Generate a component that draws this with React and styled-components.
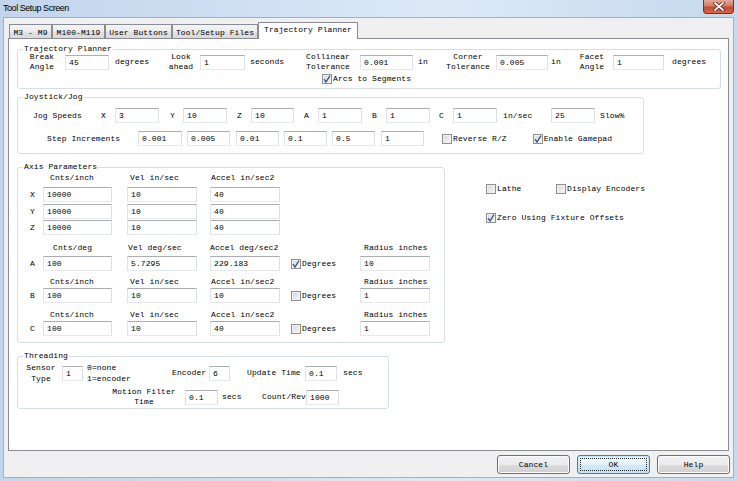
import React from 'react';
import styled, { createGlobalStyle } from 'styled-components';

const GlobalStyle = createGlobalStyle`
  html, body {
    margin: 0;
    padding: 0;
    background: #fff;
  }
  body {
    font-family: "Liberation Mono", "Courier New", monospace;
    font-size: 8px;
    letter-spacing: 0.08px;
    color: #000;
  }
`;

const Window = styled.div`
  width: 738px;
  height: 481px;
  box-sizing: border-box;
  display: flex;
  flex-direction: column;
  overflow: hidden;
  background: linear-gradient(to right, #c2d5ec 0%, #d3e2f4 40%, #dde9f7 60%, #c6d9ee 100%);
`;

const TitleBar = styled.div`
  flex: none;
  height: 17px;
  display: flex;
  align-items: flex-start;
  justify-content: space-between;
`;

const Title = styled.span`
  font-family: "Liberation Sans", Arial, sans-serif;
  font-size: 9px;
  letter-spacing: -0.45px;
  line-height: 17px;
  padding-left: 3px;
`;

const CloseBtn = styled.div`
  width: 31px;
  height: 14px;
  margin-right: 4px;
  box-sizing: border-box;
  border: 1px solid #7b2b20;
  border-top: none;
  border-radius: 0 0 4px 4px;
  background: linear-gradient(#e6a897, #d47a64 45%, #c44a31 55%, #d3694b);
  display: flex;
  align-items: center;
  justify-content: center;
`;

const Client = styled.div`
  flex: 1;
  margin: 0 4px 3px 3px;
  border: 1px solid #9fb0c7;
  background: #f0f0f0;
  display: flex;
  flex-direction: column;
  padding-top: 4px;
`;

const TabStrip = styled.div`
  flex: none;
  height: 17px;
  margin-left: 5px;
  display: flex;
  align-items: flex-end;
  position: relative;
  z-index: 1;
`;

const Tab = styled.div`
  flex: none;
  box-sizing: border-box;
  width: ${p => p.$w}px;
  height: ${p => (p.$active ? 17 : 15)}px;
  padding-top: ${p => (p.$active ? 2 : 3)}px;
  border: 1px solid #898c95;
  border-bottom: ${p => (p.$active ? 'none' : '1px solid #898c95')};
  background: ${p => (p.$active ? '#fff' : 'linear-gradient(#f4f4f4, #ececec 50%, #e2e2e2 51%, #dadada)')};
  line-height: 10px;
  text-align: center;
  white-space: pre;
`;

const Panel = styled.div`
  flex: none;
  height: 413px;
  box-sizing: border-box;
  margin: -1px 4px 0 4px;
  padding: 5px 0 0 8px;
  background: #fff;
  border: 1px solid #898c95;
  display: flex;
  flex-direction: column;
  align-items: flex-start;
`;

const Group = styled.fieldset`
  box-sizing: border-box;
  width: ${p => p.$w}px;
  min-inline-size: 0;
  margin: ${p => p.$mt || 0}px 0 0 0;
  padding: 0 0 ${p => p.$pb || 0}px 0;
  border: 1px solid #d5dfe5;
  border-radius: 3px;
`;

const Legend = styled.legend`
  margin-left: 5px;
  padding: 0 1px;
  line-height: 10px;
`;

const Row = styled.div`
  display: flex;
  align-items: center;
  height: ${p => p.$h}px;
  margin-top: ${p => p.$mt || 0}px;
`;

const Txt = styled.span`
  flex: none;
  display: block;
  box-sizing: border-box;
  width: ${p => (p.$w ? `${p.$w}px` : 'auto')};
  margin-left: ${p => p.$ml || 0}px;
  padding-left: ${p => p.$pl || 0}px;
  text-align: ${p => (p.$center ? 'center' : 'left')};
  line-height: ${p => p.$lh || 10}px;
  white-space: pre;
`;

const Field = styled.input.attrs({ type: 'text', readOnly: true })`
  flex: none;
  box-sizing: border-box;
  width: ${p => p.$w}px;
  height: 15px;
  margin: 0 0 0 ${p => p.$ml || 0}px;
  padding: 0 0 0 3px;
  border: 1px solid;
  border-color: #abadb3 #dbdfe6 #e3e9ef #e2e3ea;
  background: #fff;
  font: inherit;
  letter-spacing: inherit;
  color: #000;
  outline: none;
`;

const CheckWrap = styled.span`
  flex: none;
  display: flex;
  align-items: center;
  gap: 1px;
  width: ${p => (p.$w ? `${p.$w}px` : 'auto')};
  margin-left: ${p => p.$ml || 0}px;
  line-height: 10px;
  white-space: pre;
`;

const Box = styled.span`
  flex: none;
  width: 10px;
  height: 10px;
  box-sizing: border-box;
  border: 1px solid #8e8f8f;
  background: linear-gradient(135deg, #d8d8d8, #f7f7f7);
  box-shadow: inset 0 0 0 1px #f2f2f2;
  display: flex;
  align-items: center;
  justify-content: center;
`;

const AxisArea = styled.div`
  display: flex;
  align-items: flex-start;
  margin-top: 8px;
`;

const Options = styled.div`
  margin-left: 41px;
  padding-top: 22px;
  display: flex;
  flex-direction: column;
  gap: 19px;
`;

const OptionRow = styled.div`
  display: flex;
`;

const Footer = styled.div`
  flex: 1;
  display: flex;
  justify-content: flex-end;
  align-items: flex-start;
  gap: 7px;
  padding: 4px 3px 0 0;
`;

const Button = styled.button`
  width: 73px;
  height: 19px;
  box-sizing: border-box;
  padding: 0;
  border: 1px solid ${p => (p.$default ? '#3c7fb1' : '#707070')};
  border-radius: 3px;
  background: ${p => (p.$default
    ? 'linear-gradient(#f1f8fd, #e3f1fb 50%, #d3eaf9 51%, #c4e2f6)'
    : 'linear-gradient(#f2f2f2, #ebebeb 50%, #dddddd 51%, #cfcfcf)')};
  box-shadow: inset 0 0 0 1px ${p => (p.$default ? '#c9e6f8' : '#fbfbfb')};
  font: inherit;
  letter-spacing: inherit;
  color: #000;
  outline: ${p => (p.$default ? '1px dotted #222' : 'none')};
  outline-offset: -4px;
`;

const Check = ({ checked, children, ...rest }) => (
  <CheckWrap {...rest}>
    <Box>
      {checked && (
        <svg width="8" height="8" viewBox="0 0 8 8">
          <path d="M1 4.2 L3 7 L7 0.6" fill="none" stroke="#3b579a" strokeWidth="1.4" />
        </svg>
      )}
    </Box>
    {children}
  </CheckWrap>
);

const tabs = [
  ['M3 - M9', 43],
  ['M100-M119', 53],
  ['User Buttons', 67],
  ['Tool/Setup Files', 86],
  ['Trajectory Planner', 100, true],
];

const inchHeads = [['Cnts/inch', 7], ['Vel in/sec', 3], ['Accel in/sec2', 1]];
const degHeads = [['Cnts/deg', 10], ['Vel deg/sec', 1], ['Accel deg/sec2', 0]];

const Heads = ({ mt, cols, radius }) => (
  <Row $h={10} $mt={mt}>
    <Txt $w={25} />
    <Txt $w={69} $pl={cols[0][1]}>{cols[0][0]}</Txt>
    <Txt $w={70} $ml={15} $pl={cols[1][1]}>{cols[1][0]}</Txt>
    <Txt $w={70} $ml={13} $pl={cols[2][1]}>{cols[2][0]}</Txt>
    {radius && <Txt $w={70} $ml={80} $pl={4}>Radius inches</Txt>}
  </Row>
);

const AxisRow = ({ mt, axis, vals, deg, radius }) => (
  <Row $h={15} $mt={mt}>
    <Txt $w={25} $pl={12}>{axis}</Txt>
    <Field $w={69} value={vals[0]} />
    <Field $w={70} $ml={15} value={vals[1]} />
    <Field $w={70} $ml={13} value={vals[2]} />
    {radius !== undefined && (
      <>
        <Check $w={69} $ml={11} checked={deg}>Degrees</Check>
        <Field $w={70} value={radius} />
      </>
    )}
  </Row>
);

const CloseIcon = () => (
  <svg width="12" height="9" viewBox="0 0 12 9">
    <path d="M2 1 L10 8 M10 1 L2 8" stroke="#5a1d14" strokeWidth="3.4" strokeLinecap="round" />
    <path d="M2 1 L10 8 M10 1 L2 8" stroke="#fff" strokeWidth="1.8" strokeLinecap="round" />
  </svg>
);

export default function App() {
  return (
    <>
      <GlobalStyle />
      <Window>
        <TitleBar>
          <Title>Tool Setup Screen</Title>
          <CloseBtn><CloseIcon /></CloseBtn>
        </TitleBar>
        <Client>
          <TabStrip>
            {tabs.map(([label, w, active]) => (
              <Tab key={label} $w={w} $active={active}>{label}</Tab>
            ))}
          </TabStrip>
          <Panel>
            <Group $w={704} $pb={4}>
              <Legend>Trajectory Planner</Legend>
              <Row $h={20} $mt={-2}>
                <Txt $w={34} $ml={7} $center>{'Break\nAngle'}</Txt>
                <Field $w={44} $ml={6} value="45" />
                <Txt $w={35} $ml={6}>degrees</Txt>
                <Txt $w={34} $ml={14} $center>{'Look\nahead'}</Txt>
                <Field $w={45} $ml={2} value="1" />
                <Txt $w={35} $ml={5}>seconds</Txt>
                <Txt $w={46} $ml={20} $center>{'Collinear\nTolerance'}</Txt>
                <Field $w={53} $ml={9} value="0.001" />
                <Txt $w={10} $ml={5}>in</Txt>
                <Txt $w={46} $ml={17} $center>{'Corner\nTolerance'}</Txt>
                <Field $w={52} $ml={5} value="0.005" />
                <Txt $w={10} $ml={3}>in</Txt>
                <Txt $w={30} $ml={16} $center>{'Facet\nAngle'}</Txt>
                <Field $w={51} $ml={6} value="1" />
                <Txt $ml={8}>degrees</Txt>
              </Row>
              <Row $h={11} $mt={1}>
                <Check $ml={304} checked>Arcs to Segments</Check>
              </Row>
            </Group>

            <Group $w={627} $mt={3} $pb={7}>
              <Legend>Joystick/Jog</Legend>
              <Row $h={15} $mt={6}>
                <Txt $w={68} $ml={15}>Jog Speeds</Txt>
                <Txt $w={14}>X</Txt>
                <Field $w={44} value="3" />
                <Txt $w={13} $ml={11}>Y</Txt>
                <Field $w={44} value="10" />
                <Txt $w={14} $ml={10}>Z</Txt>
                <Field $w={43} value="10" />
                <Txt $w={14} $ml={10}>A</Txt>
                <Field $w={44} value="1" />
                <Txt $w={14} $ml={10}>B</Txt>
                <Field $w={44} value="1" />
                <Txt $w={14} $ml={9}>C</Txt>
                <Field $w={44} value="1" />
                <Txt $w={48} $ml={6}>in/sec</Txt>
                <Field $w={44} value="25" />
                <Txt $ml={5}>Slow%</Txt>
              </Row>
              <Row $h={15} $mt={8}>
                <Txt $w={91} $ml={29}>Step Increments</Txt>
                <Field $w={44} value="0.001" />
                <Field $w={43} $ml={5} value="0.005" />
                <Field $w={43} $ml={6} value="0.01" />
                <Field $w={43} $ml={5} value="0.1" />
                <Field $w={43} $ml={5} value="0.5" />
                <Field $w={43} $ml={6} value="1" />
                <Check $ml={18}>Reverse R/Z</Check>
                <Check $ml={26} checked>Enable Gamepad</Check>
              </Row>
            </Group>

            <AxisArea>
              <Group $w={428} $pb={6}>
                <Legend>Axis Parameters</Legend>
                <Heads mt={1} cols={inchHeads} />
                <AxisRow mt={4} axis="X" vals={['10000', '10', '40']} />
                <AxisRow mt={2} axis="Y" vals={['10000', '10', '40']} />
                <AxisRow mt={1} axis="Z" vals={['10000', '10', '40']} />
                <Heads mt={8} cols={degHeads} radius />
                <AxisRow mt={3} axis="A" vals={['100', '5.7295', '229.183']} deg radius="10" />
                <Heads mt={6} cols={inchHeads} radius />
                <AxisRow mt={1} axis="B" vals={['100', '10', '10']} radius="1" />
                <Heads mt={7} cols={inchHeads} radius />
                <AxisRow mt={1} axis="C" vals={['100', '10', '40']} radius="1" />
              </Group>
              <Options>
                <OptionRow>
                  <Check $w={70}>Lathe</Check>
                  <Check>Display Encoders</Check>
                </OptionRow>
                <OptionRow>
                  <Check checked>Zero Using Fixture Offsets</Check>
                </OptionRow>
              </Options>
            </AxisArea>

            <Group $w={372} $mt={8} $pb={1}>
              <Legend>Threading</Legend>
              <Row $h={22} $mt={1}>
                <Txt $w={34} $ml={6} $center $lh={11}>{'Sensor\nType'}</Txt>
                <Field $w={21} $ml={4} value="1" />
                <Txt $w={45} $ml={4} $lh={11}>{'0=none\n1=encoder'}</Txt>
                <Txt $w={37} $ml={40}>Encoder</Txt>
                <Field $w={21} value="6" />
                <Txt $w={58} $ml={17}>Update Time</Txt>
                <Field $w={32} value="0.1" />
                <Txt $ml={6}>secs</Txt>
              </Row>
              <Row $h={20} $mt={3}>
                <Txt $w={68} $ml={92} $center>{'Motion Filter\nTime'}</Txt>
                <Field $w={33} $ml={7} value="0.1" />
                <Txt $w={22} $ml={4}>secs</Txt>
                <Txt $w={44} $ml={18}>Count/Rev</Txt>
                <Field $w={33} value="1000" />
              </Row>
            </Group>
          </Panel>
          <Footer>
            <Button>Cancel</Button>
            <Button $default>OK</Button>
            <Button>Help</Button>
          </Footer>
        </Client>
      </Window>
    </>
  );
}
